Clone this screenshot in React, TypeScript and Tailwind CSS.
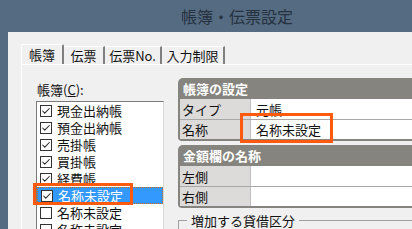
import { Check } from 'lucide-react';

const items = [
  { name: '現金出納帳', checked: true },
  { name: '預金出納帳', checked: true },
  { name: '売掛帳', checked: true },
  { name: '買掛帳', checked: true },
  { name: '経費帳', checked: true },
  { name: '名称未設定', checked: true, selected: true },
  { name: '名称未設定', checked: false },
  { name: '名称未設定', checked: false },
];

function Box({ checked }: { checked: boolean }) {
  return (
    <span className="w-[12px] h-[12px] border border-[#333] bg-white flex items-center justify-center shrink-0">
      {checked && <Check size={10} strokeWidth={2.5} className="text-[#222]" />}
    </span>
  );
}

function Panel({
  title,
  rows,
}: {
  title: string;
  rows: { label: string; value: string }[];
}) {
  return (
    <div className="rounded-tl-[5px] rounded-bl-[4px] bg-[#85847e] pl-[2px] pb-[2px]">
      <div className="h-[21px] flex items-center pl-[3px] text-white font-bold text-[13px] leading-[21px]">
        {title}
      </div>
      {rows.map((r, i) => (
        <div
          key={i}
          className={`h-[20px] flex leading-[19px] ${i > 0 ? 'border-t border-[#a8a8a8]' : ''}`}
        >
          <div className="w-[71px] bg-[#dcdbd9] flex items-center pl-[2px] text-[13px] text-[#111] border-r border-[#c0c0c0]">
            {r.label}
          </div>
          <div className="flex-1 bg-white flex items-center pl-[5px] text-[13px] text-[#111]">
            {r.value}
          </div>
        </div>
      ))}
    </div>
  );
}

export default function App() {
  return (
    <div className="relative w-[412px] h-[229px] overflow-hidden bg-[#546b82] font-['Noto_Sans_CJK_JP',sans-serif]">
      <div className="h-[32px] flex items-center pl-[181px] text-[16px] leading-[32px] text-[#26323f]">
        帳簿・伝票設定
      </div>
      <div className="ml-[8px] h-[197px] bg-[#f0f0f0] pl-[13px] pt-[12px]">
        <div className="flex items-end h-[20px] text-[13px] leading-[17px] text-[#111]">
          <div className="relative z-10 h-[20px] w-[43px] bg-[#f0f0f0] border-l border-t border-white border-r-2 border-r-[#808080] rounded-t-[2px] flex items-center justify-center">
            帳簿
          </div>
          <div className="h-[18px] w-[41px] border-t border-white border-r-2 border-r-[#808080] flex items-center justify-center">
            伝票
          </div>
          <div className="h-[18px] w-[57px] border-t border-white border-r-2 border-r-[#808080] flex items-center justify-center">
            伝票No.
          </div>
          <div className="h-[18px] w-[63px] border-t border-white border-r-2 border-r-[#808080] flex items-center justify-center">
            入力制限
          </div>
        </div>
        <div className="border-t border-l border-white h-[200px] flex items-start">
          <div className="pl-[14px] pt-[16px]">
            <div className="h-[17px] flex items-center pl-[1px] text-[13px] leading-[17px] text-[#111]">
              帳簿(<span className="underline">C</span>):
            </div>
            <div className="mt-[3px] w-[128px] h-[140px] overflow-hidden bg-white border border-[#7a7a7a] border-r-[#d8d8d8] border-b-[#d8d8d8]">
              {items.map((it, i) => (
                <div
                  key={i}
                  className={`h-[17px] flex items-center pl-[3px] gap-[5px] text-[13px] leading-[15px] ${
                    it.selected
                      ? 'bg-[#3399ff] text-white border border-dotted border-[#c86a00]'
                      : 'text-[#111]'
                  }`}
                >
                  <Box checked={it.checked} />
                  <span>{it.name}</span>
                </div>
              ))}
            </div>
          </div>
          <div className="flex-1 ml-[14px] pt-[13px] flex flex-col gap-[4px]">
            <Panel
              title="帳簿の設定"
              rows={[
                { label: 'タイプ', value: '元帳' },
                { label: '名称', value: '名称未設定' },
              ]}
            />
            <Panel
              title="金額欄の名称"
              rows={[
                { label: '左側', value: '' },
                { label: '右側', value: '' },
              ]}
            />
            <fieldset className="mt-[1px] border-t border-l border-[#a0a0a0] h-[40px] pl-[8px]">
              <legend className="px-[4px] text-[13px] leading-[15px] text-[#111]">増加する貸借区分</legend>
            </fieldset>
          </div>
        </div>
      </div>
      <div className="absolute left-[33px] top-[183px] w-[100px] h-[22px] border-[3px] border-[#ff5a0e]" />
      <div className="absolute left-[240px] top-[113px] w-[93px] h-[30px] border-[3px] border-[#ff5a0e]" />
    </div>
  );
}
